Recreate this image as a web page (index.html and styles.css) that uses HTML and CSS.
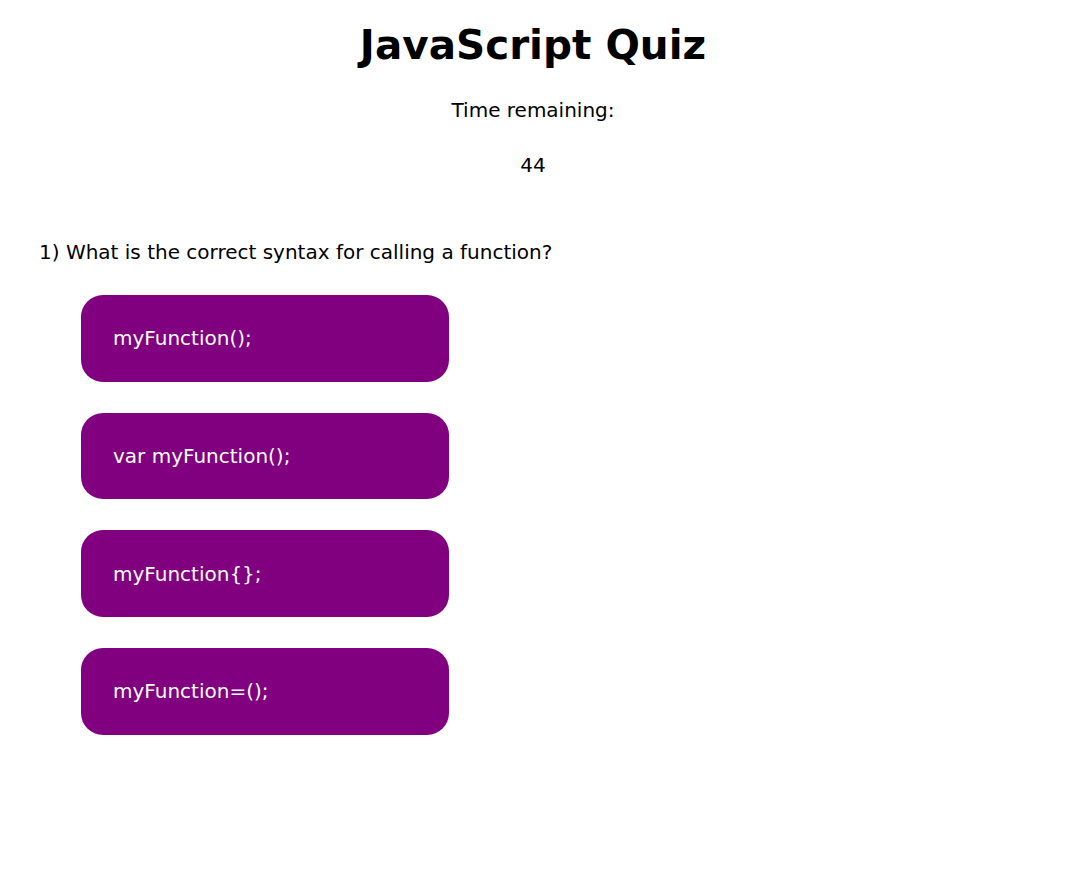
FILE: index.html
```html
<!DOCTYPE html>
<html>
<head>
<meta charset="utf-8">
<link rel="stylesheet" href="styles.css">
</head>
<body>
<header class="header">
  <h1 class="title">JavaScript Quiz</h1>
  <p class="timer-label">Time remaining:</p>
  <p class="timer-value">44</p>
</header>
<main class="quiz">
  <p class="question">1) What is the correct syntax for calling a function?</p>
  <div class="answers">
    <button class="answer">myFunction();</button>
    <button class="answer">var myFunction();</button>
    <button class="answer">myFunction{};</button>
    <button class="answer">myFunction=();</button>
  </div>
</main>
</body>
</html>
```
FILE: styles.css
```css
body {
  margin: 8px;
  font-family: "DejaVu Sans", Verdana, sans-serif;
  color: #000;
  background: #fff;
}
.header {
  display: flex;
  flex-direction: column;
  align-items: center;
}
.title {
  font-size: 40.5px;
  line-height: 46px;
  font-weight: bold;
  margin: 14px 0 0;
}
.timer-label {
  font-size: 20px;
  line-height: 23px;
  margin: 31px 0 0;
}
.timer-value {
  font-size: 20px;
  line-height: 23px;
  margin: 32px 0 0;
}
.quiz {
  padding: 0 31px;
  margin-top: 64px;
}
.question {
  font-size: 20px;
  line-height: 23px;
  margin: 0;
}
.answers {
  display: flex;
  flex-direction: column;
  align-items: flex-start;
  gap: 31px;
  margin: 31px 0 0 42px;
}
.answer {
  width: 368px;
  height: 86.67px;
  border: none;
  border-radius: 22px;
  background: #800080;
  color: #fff;
  font-family: "DejaVu Sans", Verdana, sans-serif;
  font-size: 20px;
  text-align: left;
  padding: 0 32px;
}
```
